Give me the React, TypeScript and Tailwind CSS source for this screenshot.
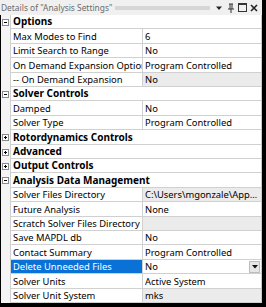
import React from 'react';

type Row =
  | { kind: 'cat'; label: string; open: boolean }
  | { kind: 'prop'; label: string; value: string; readOnly?: boolean; selected?: boolean; dropdown?: boolean };

const rows: Row[] = [
  { kind: 'cat', label: 'Options', open: true },
  { kind: 'prop', label: 'Max Modes to Find', value: '6' },
  { kind: 'prop', label: 'Limit Search to Range', value: 'No' },
  { kind: 'prop', label: 'On Demand Expansion Option', value: 'Program Controlled' },
  { kind: 'prop', label: '-- On Demand Expansion', value: 'No', readOnly: true },
  { kind: 'cat', label: 'Solver Controls', open: true },
  { kind: 'prop', label: 'Damped', value: 'No' },
  { kind: 'prop', label: 'Solver Type', value: 'Program Controlled' },
  { kind: 'cat', label: 'Rotordynamics Controls', open: false },
  { kind: 'cat', label: 'Advanced', open: false },
  { kind: 'cat', label: 'Output Controls', open: false },
  { kind: 'cat', label: 'Analysis Data Management', open: true },
  { kind: 'prop', label: 'Solver Files Directory', value: 'C:\\Users\\mgonzale\\AppData\\Local\\Temp', readOnly: true },
  { kind: 'prop', label: 'Future Analysis', value: 'None' },
  { kind: 'prop', label: 'Scratch Solver Files Directory', value: '', readOnly: true },
  { kind: 'prop', label: 'Save MAPDL db', value: 'No' },
  { kind: 'prop', label: 'Contact Summary', value: 'Program Controlled' },
  { kind: 'prop', label: 'Delete Unneeded Files', value: 'No', selected: true, dropdown: true },
  { kind: 'prop', label: 'Solver Units', value: 'Active System' },
  { kind: 'prop', label: 'Solver Unit System', value: 'mks', readOnly: true },
];

// row pitch is ~14.4px, so heights go 14/15 in a repeating pattern
const heights = ['h-[14px]', 'h-[15px]', 'h-[14px]', 'h-[15px]', 'h-[14px]'];

const Expander = ({ open }: { open: boolean }) => (
  <svg width="7" height="7" viewBox="0 0 7 7" className="block">
    <rect x="0.5" y="0.5" width="6" height="6" fill="#fff" stroke="#8a8a8a" />
    <path d="M2 3.5h3" stroke="#000" />
    {!open && <path d="M3.5 2v3" stroke="#000" />}
  </svg>
);

export default function App() {
  return (
    <div
      className="w-[266px] h-[307px] bg-black overflow-hidden text-[9.4px] text-black"
      style={{ fontFamily: '"Noto Sans", "Open Sans", sans-serif' }}
    >
      <div className="w-[262px] h-[303px] bg-white flex flex-col">
        {/* title bar */}
        <div className="h-[15px] bg-[#f0f0f0] flex items-center pl-[1px] pr-[4px] gap-[3px] leading-[13px]">
          <span className="text-[#6b6b6b] whitespace-nowrap text-[8.4px]">Details of "Analysis Settings"</span>
          <div className="flex-1 h-[4px] bg-[radial-gradient(circle,#b8b8b8_0.6px,transparent_0.8px)] bg-[length:2px_2px]" />
          <svg width="8" height="8" viewBox="0 0 8 8" className="ml-[2px]">
            <path d="M1 2.5h6L4 6z" fill="#222" />
          </svg>
          <svg width="8" height="10" viewBox="0 0 8 10" className="ml-[1px]">
            <path d="M2 1h4M3 1v5M5 1v5M1 6h6M4 6v4" stroke="#333" strokeWidth="1" fill="none" />
          </svg>
          <svg width="9" height="9" viewBox="0 0 9 9">
            <rect x="0.5" y="0.5" width="8" height="8" fill="none" stroke="#333" />
            <path d="M0.5 1.5h8" stroke="#333" />
          </svg>
          <svg width="8" height="8" viewBox="0 0 8 8">
            <path d="M1 1l6 6M7 1l-6 6" stroke="#222" strokeWidth="1.6" />
          </svg>
        </div>

        {/* grid */}
        <div className="flex-1 flex flex-col border-l border-black border-r border-r-[#c9c9c9] bg-[#f4f4f4]">
          {rows.map((r, i) => (
            <div key={i} className={`${heights[i % 5]} flex`}>
              <div className="w-[9px] flex items-center justify-center shrink-0">
                {r.kind === 'cat' && <Expander open={r.open} />}
              </div>
              {r.kind === 'cat' ? (
                <div className="flex-1 flex items-center bg-white border-l border-b border-[#d0d0d0] pl-[2px] font-bold text-[10px] leading-[13px] whitespace-nowrap">
                  {r.label}
                </div>
              ) : (
                <>
                  <div
                    className={`w-[132px] shrink-0 flex items-center border-l border-b border-[#d0d0d0] pl-[2px] leading-[13px] whitespace-nowrap overflow-hidden ${
                      r.selected ? 'bg-[#0a72d6] text-white' : 'bg-white'
                    }`}
                  >
                    {r.label}
                  </div>
                  <div
                    className={`flex-1 min-w-0 flex items-center border-l border-b border-[#d0d0d0] pl-[2px] leading-[13px] ${
                      r.readOnly ? 'bg-[#ebebeb]' : 'bg-white'
                    }`}
                  >
                    <span className="flex-1 min-w-0 truncate">{r.value}</span>
                    {r.dropdown && (
                      <div className="w-[11px] h-[12px] mr-[1px] bg-[#e6e6e6] border border-[#bdbdbd] flex items-center justify-center">
                        <svg width="6" height="4" viewBox="0 0 6 4">
                          <path d="M0 0h6L3 3.5z" fill="#111" />
                        </svg>
                      </div>
                    )}
                  </div>
                </>
              )}
            </div>
          ))}
        </div>
      </div>
    </div>
  );
}
